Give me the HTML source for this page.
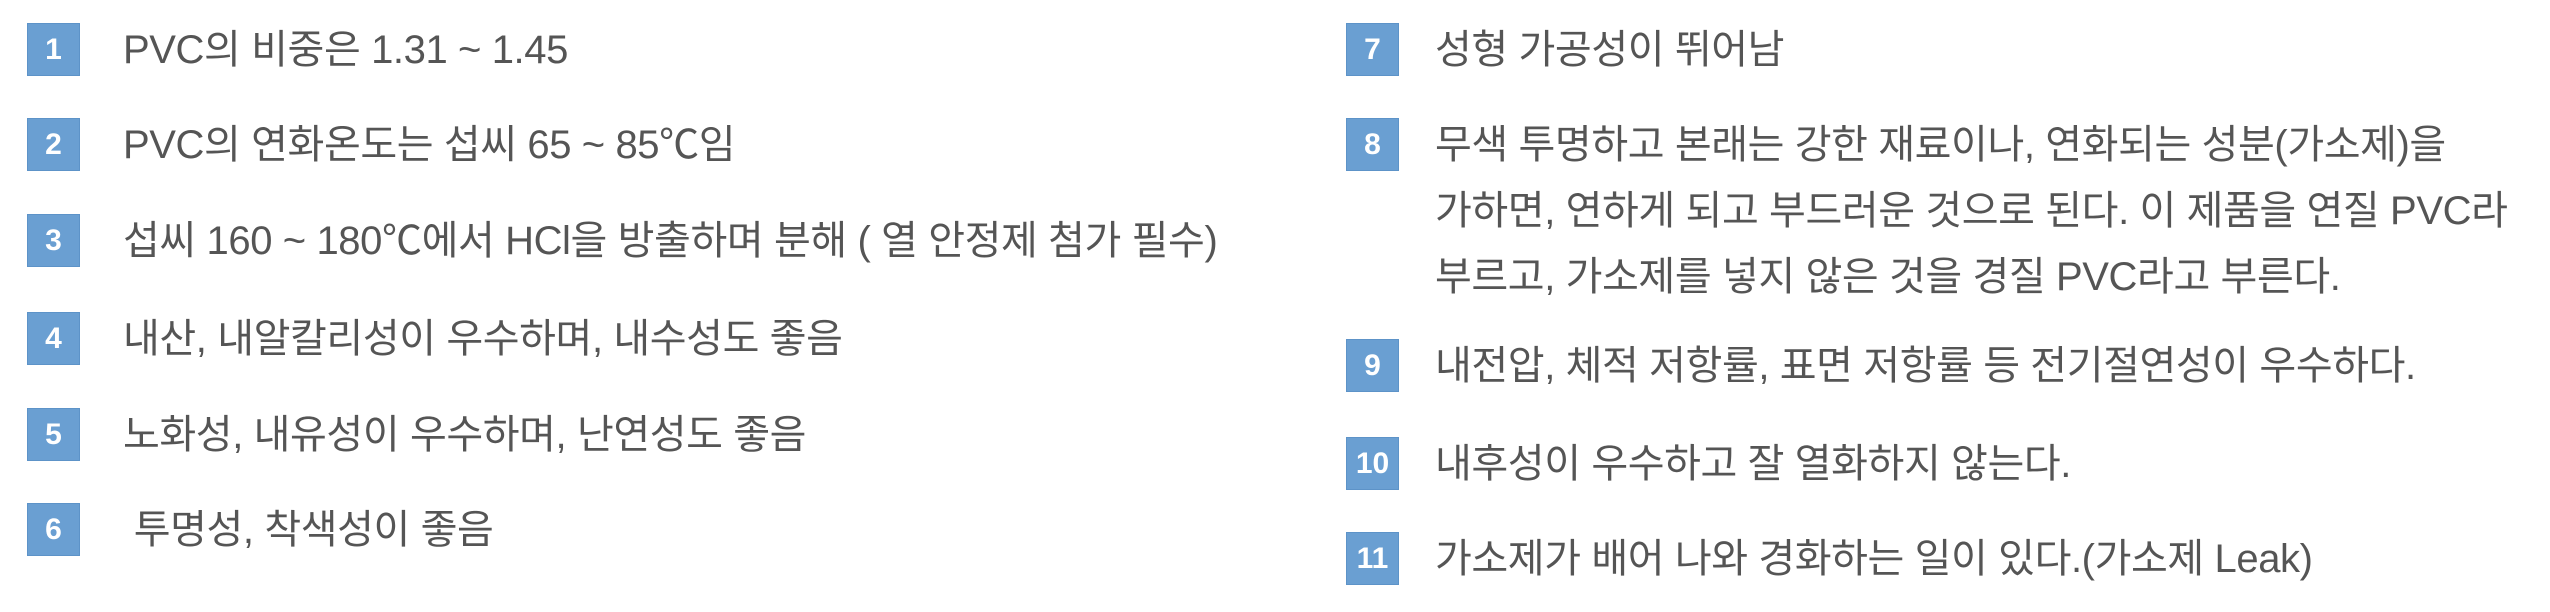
<!DOCTYPE html>
<html><head><meta charset="utf-8"><style>
html,body{margin:0;padding:0;background:#fff;width:2550px;height:612px;overflow:hidden}
body{position:relative;font-family:"Liberation Sans","Noto Sans CJK KR",sans-serif;color:#555}
.b{position:absolute;width:53px;height:53px;background:#6a9fd2;color:#fff;font-weight:bold;font-size:30px;line-height:53px;text-align:center;box-shadow:inset 0 0 0 1px #5d93c8}
.t{position:absolute;font-size:40px;line-height:66px;white-space:nowrap;letter-spacing:-0.4px}
</style></head><body>
<div class="b" style="left:27px;top:23px">1</div><div class="t" style="left:123px;top:17px">PVC의 비중은 1.31 ~ 1.45</div>
<div class="b" style="left:27px;top:118px">2</div><div class="t" style="left:123px;top:112px">PVC의 연화온도는 섭씨 65 ~ 85℃임</div>
<div class="b" style="left:27px;top:214px">3</div><div class="t" style="left:123px;top:208px">섭씨 160 ~ 180℃에서 HCl을 방출하며 분해 ( 열 안정제 첨가 필수)</div>
<div class="b" style="left:27px;top:312px">4</div><div class="t" style="left:123px;top:306px">내산, 내알칼리성이 우수하며, 내수성도 좋음</div>
<div class="b" style="left:27px;top:408px">5</div><div class="t" style="left:123px;top:402px">노화성, 내유성이 우수하며, 난연성도 좋음</div>
<div class="b" style="left:27px;top:503px">6</div><div class="t" style="left:123px;top:497px">&nbsp;투명성, 착색성이 좋음</div>

<div class="b" style="left:1346px;top:23px">7</div><div class="t" style="left:1435px;top:17px">성형 가공성이 뛰어남</div>
<div class="b" style="left:1346px;top:118px">8</div><div class="t" style="left:1435px;top:112px">무색 투명하고 본래는 강한 재료이나, 연화되는 성분(가소제)을<br>가하면, 연하게 되고 부드러운 것으로 된다. 이 제품을 연질 PVC라<br>부르고, 가소제를 넣지 않은 것을 경질 PVC라고 부른다.</div>
<div class="b" style="left:1346px;top:339px">9</div><div class="t" style="left:1435px;top:333px">내전압, 체적 저항률, 표면 저항률 등 전기절연성이 우수하다.</div>
<div class="b" style="left:1346px;top:437px">10</div><div class="t" style="left:1435px;top:431px">내후성이 우수하고 잘 열화하지 않는다.</div>
<div class="b" style="left:1346px;top:532px">11</div><div class="t" style="left:1435px;top:526px">가소제가 배어 나와 경화하는 일이 있다.(가소제 Leak)</div>
</body></html>
